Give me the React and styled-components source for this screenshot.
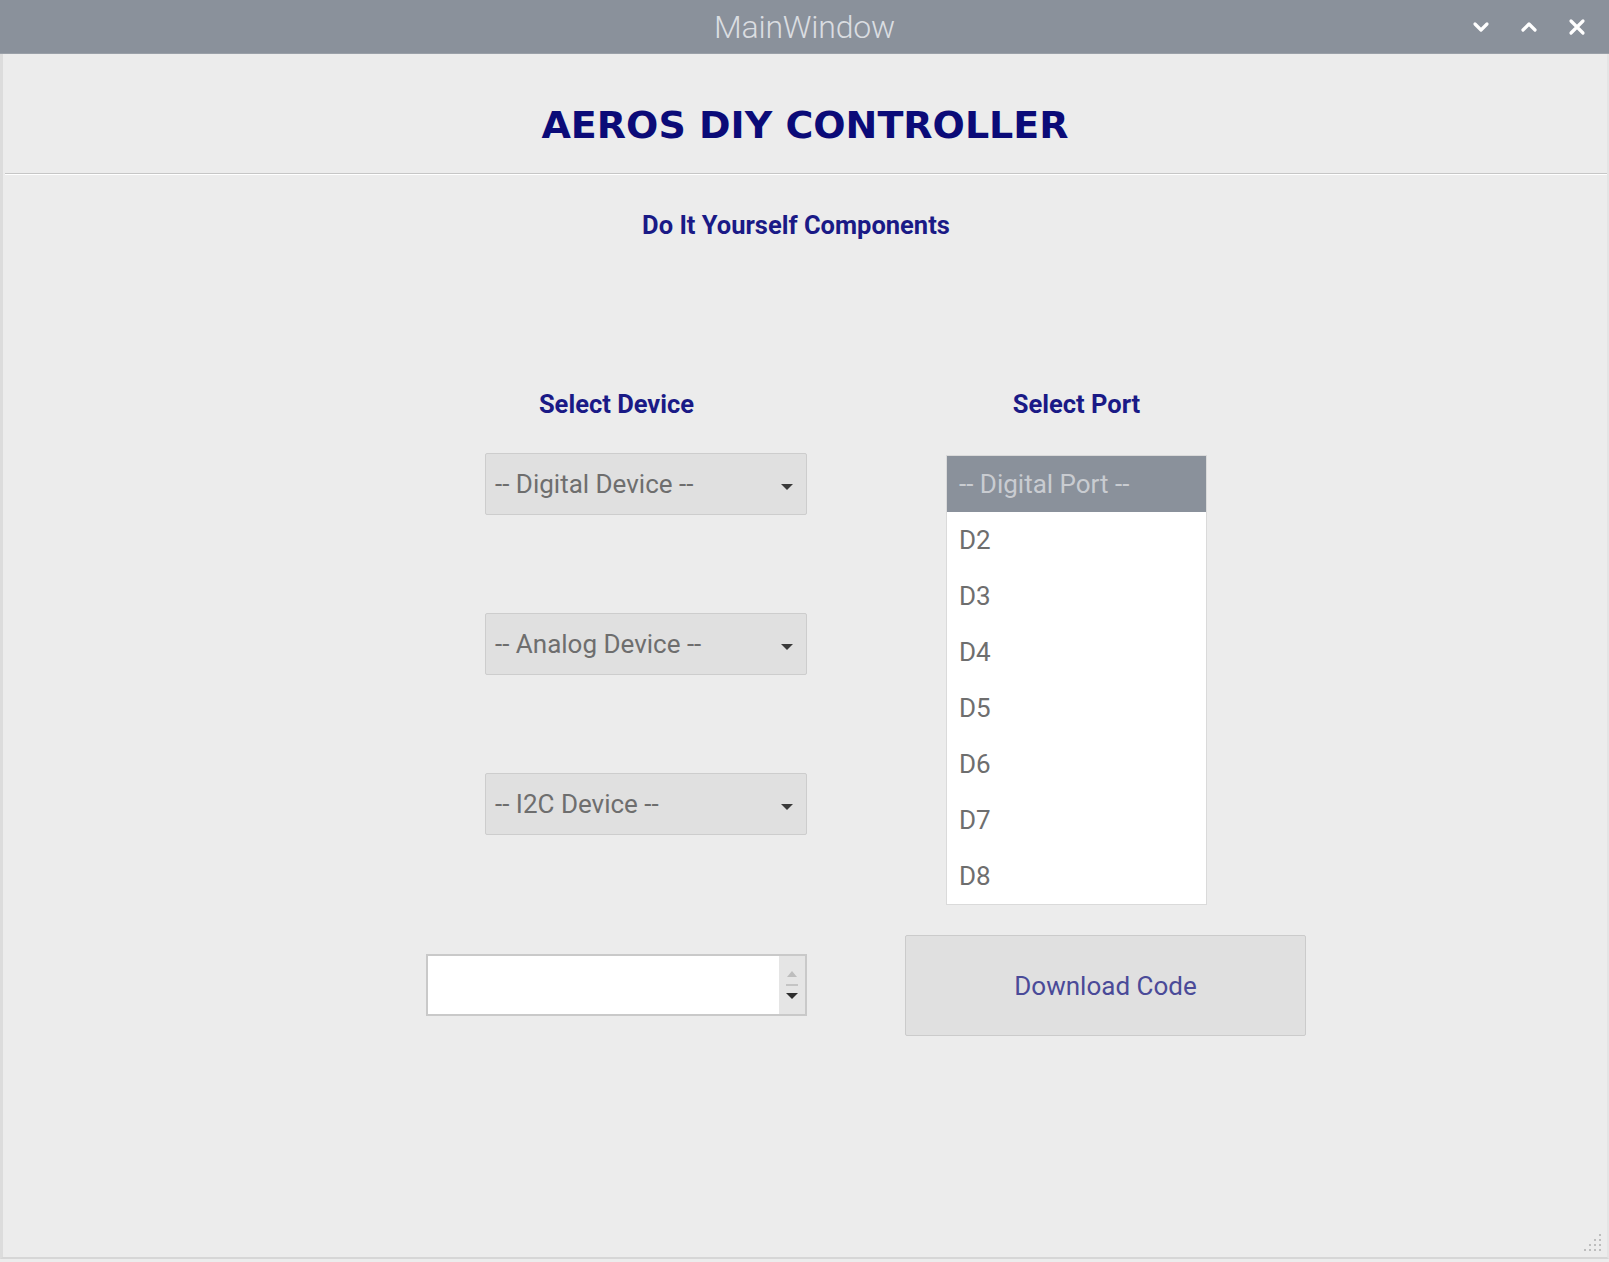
import React from "react";
import styled, { createGlobalStyle } from "styled-components";

const Global = createGlobalStyle`
  html, body { margin: 0; padding: 0; background: #ececec; }
  body { font-family: Roboto, "Liberation Sans", sans-serif; }
  * { box-sizing: border-box; }
`;

const Window = styled.div`
  position: relative;
  width: 1609px;
  height: 1262px;
  display: flex;
  flex-direction: column;
  background: #ececec;
  overflow: hidden;
`;

const TitleBar = styled.div`
  height: 54px;
  flex: none;
  background: #8a919b;
  display: flex;
  align-items: center;
  justify-content: center;
  position: relative;
  border-bottom: 1px solid #9aa0a8;
`;

const TitleText = styled.div`
  font-family: Roboto, sans-serif;
  font-weight: 300;
  font-size: 32px;
  color: #dadde1;
  letter-spacing: -0.2px;
`;

const WinButtons = styled.div`
  position: absolute;
  right: 22px;
  top: 0;
  height: 54px;
  display: flex;
  align-items: center;
  gap: 28px;
`;

const Body = styled.div`
  flex: 1;
  display: flex;
  flex-direction: column;
  border-left: 3px solid #dcdcdc;
  border-right: 2px solid #e4e4e4;
  border-bottom: 2px solid #d6d6d6;
  margin-bottom: 3px;
`;

const Header = styled.h1`
  margin: 0;
  padding: 48px 0 25px;
  text-align: center;
  font-family: "DejaVu Sans", Verdana, sans-serif;
  font-weight: bold;
  font-size: 38px;
  line-height: 46px;
  color: #0b0b78;
  letter-spacing: 0;
`;

const Divider = styled.div`
  margin-left: 2px;
  height: 2px;
  border-top: 1px solid #c6c6c6;
  border-bottom: 1px solid #ffffff;
`;

const Subtitle = styled.div`
  margin-top: 35px;
  text-align: center;
  padding-right: 18px;
  font-family: Roboto, sans-serif;
  font-weight: bold;
  font-size: 25.5px;
  line-height: 30px;
  color: #1a1a86;
`;

const Form = styled.div`
  margin-top: 149px;
  margin-left: 423px;
  display: flex;
  gap: 98px;
  align-items: flex-start;
`;

const Column = styled.div`
  display: flex;
  flex-direction: column;
  width: ${(p) => p.$w}px;
`;

const Label = styled.div`
  font-family: Roboto, sans-serif;
  font-weight: bold;
  font-size: 25.5px;
  line-height: 30px;
  color: #1a1a86;
  text-align: center;
`;

const Combo = styled.div`
  margin-top: ${(p) => p.$mt}px;
  margin-left: 59px;
  height: 62px;
  background: #e0e0e0;
  border: 1px solid #cdcdcd;
  border-radius: 2px;
  display: flex;
  align-items: center;
  padding: 0 13px 0 9px;
  font-family: Roboto, sans-serif;
  font-size: 26px;
  color: #6e6e6e;
  justify-content: space-between;
`;

const ComboArrow = styled.span`
  width: 0;
  height: 0;
  border-left: 6px solid transparent;
  border-right: 6px solid transparent;
  border-top: 6px solid #3a3a3a;
  margin-top: 6px;
`;

const Spin = styled.div`
  margin-top: 119px;
  height: 62px;
  background: #ffffff;
  border: 2px solid #c9c9c9;
  display: flex;
  justify-content: flex-end;
`;

const SpinButtons = styled.div`
  width: 26px;
  background: #e5e5e5;
  display: flex;
  flex-direction: column;
  align-items: center;
  justify-content: center;
  gap: 7px;
`;

const SpinUp = styled.span`
  width: 0;
  height: 0;
  border-left: 5px solid transparent;
  border-right: 5px solid transparent;
  border-bottom: 6px solid #bdbdbd;
`;

const SpinDash = styled.span`
  width: 12px;
  height: 2px;
  background: #c4c4c4;
`;

const SpinDown = styled.span`
  width: 0;
  height: 0;
  border-left: 6px solid transparent;
  border-right: 6px solid transparent;
  border-top: 6px solid #2e2e2e;
`;

const PortBlock = styled.div`
  margin-left: 41px;
  width: 261px;
  display: flex;
  flex-direction: column;
`;

const List = styled.div`
  margin-top: 36px;
  background: #ffffff;
  border: 1px solid #dadada;
  display: flex;
  flex-direction: column;
`;

const ListItem = styled.div`
  height: 56px;
  display: flex;
  align-items: center;
  padding-left: 12px;
  font-family: Roboto, sans-serif;
  font-size: 26px;
  color: ${(p) => (p.$selected ? "#c9ccd1" : "#6e6e6e")};
  background: ${(p) => (p.$selected ? "#8a919b" : "transparent")};
`;

const Button = styled.div`
  margin-top: 30px;
  height: 101px;
  background: #e0e0e0;
  border: 1px solid #cbcbcb;
  border-radius: 2px;
  display: flex;
  align-items: center;
  justify-content: center;
  font-family: Roboto, sans-serif;
  font-size: 26px;
  color: #4a4a98;
`;

const Grip = styled.svg`
  position: absolute;
  right: 6px;
  bottom: 8px;
`;

const Icon = ({ d }) => (
  <svg width="20" height="20" viewBox="0 0 20 20">
    <path d={d} fill="none" stroke="#ffffff" strokeWidth="3.2" strokeLinecap="round" strokeLinejoin="round" />
  </svg>
);

export default function App() {
  const ports = ["D2", "D3", "D4", "D5", "D6", "D7", "D8"];
  return (
    <>
      <Global />
      <Window>
        <TitleBar>
          <TitleText>MainWindow</TitleText>
          <WinButtons>
            <Icon d="M4 7 L10 13 L16 7" />
            <Icon d="M4 13 L10 7 L16 13" />
            <Icon d="M4 4 L16 16 M16 4 L4 16" />
          </WinButtons>
        </TitleBar>
        <Body>
          <Header>AEROS DIY CONTROLLER</Header>
          <Divider />
          <Subtitle>Do It Yourself Components</Subtitle>
          <Form>
            <Column $w={381}>
              <Label>Select Device</Label>
              <Combo $mt={34}>
                <span>-- Digital Device --</span>
                <ComboArrow />
              </Combo>
              <Combo $mt={98}>
                <span>-- Analog Device --</span>
                <ComboArrow />
              </Combo>
              <Combo $mt={98}>
                <span>-- I2C Device --</span>
                <ComboArrow />
              </Combo>
              <Spin>
                <SpinButtons>
                  <SpinUp />
                  <SpinDash />
                  <SpinDown />
                </SpinButtons>
              </Spin>
            </Column>
            <Column $w={401}>
              <PortBlock>
                <Label>Select Port</Label>
                <List>
                  <ListItem $selected>-- Digital Port --</ListItem>
                  {ports.map((p) => (
                    <ListItem key={p}>{p}</ListItem>
                  ))}
                </List>
              </PortBlock>
              <Button>Download Code</Button>
            </Column>
          </Form>
        </Body>
        <Grip width="22" height="22" viewBox="0 0 22 22">
          {[
            [18, 2], [18, 7], [13, 7], [18, 12], [13, 12], [8, 12],
            [18, 17], [13, 17], [8, 17], [3, 17],
          ].map(([x, y], i) => (
            <rect key={i} x={x} y={y} width="2" height="2" fill="#bdbdbd" />
          ))}
        </Grip>
      </Window>
    </>
  );
}
